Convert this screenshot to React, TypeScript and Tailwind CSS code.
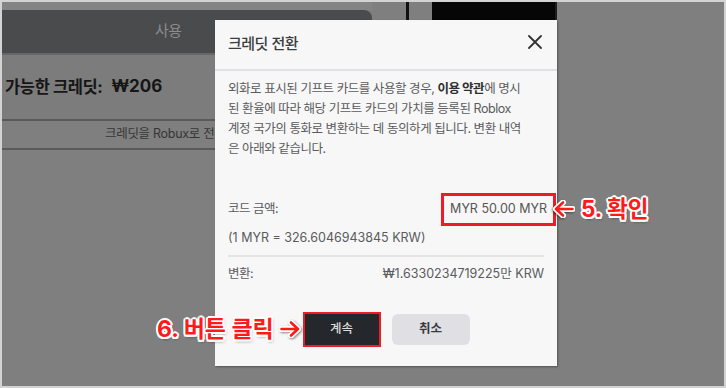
import React from "react";

const outline =
  "[text-shadow:-2px_0_0_#fff,2px_0_0_#fff,0_-2px_0_#fff,0_2px_0_#fff,-1.5px_-1.5px_0_#fff,1.5px_1.5px_0_#fff,-1.5px_1.5px_0_#fff,1.5px_-1.5px_0_#fff,1px_2px_3px_rgba(0,0,0,0.55)]";

function Arrow({ flip }: { flip?: boolean }) {
  return (
    <svg
      width="22"
      height="18"
      viewBox="0 0 22 18"
      className={flip ? "-scale-x-100 drop-shadow-[1px_1px_1px_rgba(0,0,0,0.45)]" : "drop-shadow-[1px_1px_1px_rgba(0,0,0,0.45)]"}
    >
      <path d="M2.5 9 H19 M12 2.5 L19 9 L12 15.5" fill="none" stroke="#fff" strokeWidth="6" strokeLinecap="round" strokeLinejoin="round" />
      <path d="M2.5 9 H19 M12 2.5 L19 9 L12 15.5" fill="none" stroke="#ff1a1a" strokeWidth="2.6" strokeLinecap="round" strokeLinejoin="round" />
    </svg>
  );
}

export default function App() {
  return (
    <div className="relative w-[726px] h-[388px] overflow-hidden bg-[#d3d3d3] p-[2px] font-['Inter','Noto_Sans_CJK_KR',sans-serif]">
      <div className="relative flex w-full h-full bg-[#7f7f7f]">
        {/* left background panel */}
        <div className="flex w-[370px] flex-col overflow-hidden">
          <div className="h-[8px] bg-[#848484]" />
          <div className="flex h-[43px] items-center rounded-tr-[8px] bg-[#4a4b4d] pl-[153px] text-[15px] tracking-[-0.5px] text-[#8b8b8b]">
            사용
          </div>
          <div className="h-[2px] bg-[#676767]" />
          <div className="flex h-[64px] items-center bg-[#7c7c7c]">
            <span className="ml-[-30px] whitespace-nowrap text-[16.5px] font-bold tracking-[-0.4px] text-[#161616]">
              사용 가능한 크레딧:
            </span>
            <span className="ml-[9px] text-[17px] font-bold text-[#161616]">₩206</span>
          </div>
          <div className="h-[2px] bg-[#5a5a5a]" />
          <div className="flex h-[27px] items-center pl-[103px] text-[12.5px] tracking-[-0.3px] text-[#363636] whitespace-nowrap">
            크레딧을 Robux로 전환하기
          </div>
          <div className="h-[2px] bg-[#5a5a5a]" />
        </div>
        <div className="w-[34px]" />
        <div className="h-[18px] w-[3px] bg-[#111]" />
        <div className="w-[23px]" />
        <div className="h-[188px] w-[125px] border-r-2 border-[#1c1c1c]">
          <div className="h-[18px] bg-[#060606]" />
        </div>
      </div>

      {/* modal */}
      <div className="absolute left-[215px] top-[20px] flex h-[346px] w-[342px] flex-col bg-[#f7f7f7] shadow-[1px_1px_2px_rgba(0,0,0,0.35)]">
        <div className="flex h-[49px] items-center justify-between pl-[13px] pr-[15px]">
          <span className="text-[15px] font-medium tracking-[-0.5px] text-[#3a3c3f]">크레딧 전환</span>
          <svg width="14" height="14" viewBox="0 0 14 14" className="mt-[-5px]">
            <path d="M1 1 L13 13 M13 1 L1 13" stroke="#333" strokeWidth="1.8" strokeLinecap="round" />
          </svg>
        </div>
        <div className="h-[2px] bg-[#e0e0e6]" />
        <div className="flex flex-col px-[13px] pt-[8px] text-[12.5px] text-[#5a5b5d]">
          <p className="whitespace-nowrap leading-[20px] tracking-[-0.45px]">
            외화로 표시된 기프트 카드를 사용할 경우, <b className="font-bold text-[#2e2f31]">이용 약관</b>에 명시
            <br />
            된 환율에 따라 해당 기프트 카드의 가치를 등록된 Roblox
            <br />
            계정 국가의 통화로 변환하는 데 동의하게 됩니다. 변환 내역
            <br />
            은 아래와 같습니다.
          </p>
          <div className="mt-[40px] flex h-[20px] items-center justify-between">
            <span className="tracking-[-0.5px]">코드 금액:</span>
            <span className="-mr-[12px] flex h-[33px] items-center border-[3px] border-[#ee1c24] px-[6px] text-[12.5px] text-[#555]">
              MYR 50.00 MYR
            </span>
          </div>
          <div className="mt-[9px] flex h-[20px] items-center">(1 MYR = 326.6046943845 KRW)</div>
          <div className="mt-[7px] h-[2px] bg-[#e4e4e6]" />
          <div className="mt-[7px] flex h-[20px] items-center justify-between">
            <span className="tracking-[-0.5px]">변환:</span>
            <span>₩1.6330234719225만 KRW</span>
          </div>
        </div>
        <div className="mt-[28px] flex items-center justify-center gap-[11px]">
          <div className="border-2 border-[#ee1c24]">
            <div className="flex h-[31px] w-[74px] items-center justify-center bg-[#24272b] text-[12.5px] font-medium text-[#dcdcdc]">
              계속
            </div>
          </div>
          <div className="flex h-[31px] w-[78px] items-center justify-center rounded-[6px] bg-[#dfdfe4] text-[12.5px] font-bold text-[#3a3b3e]">
            취소
          </div>
        </div>
      </div>

      {/* annotations */}
      <div
        className={`absolute left-[553px] top-[195px] flex items-center gap-[6px] whitespace-nowrap text-[22.5px] font-bold leading-[28px] text-[#ff1a1a] ${outline}`}
      >
        <Arrow flip />
        <span>5. 확인</span>
      </div>
      <div
        className={`absolute left-[157px] top-[315px] flex items-center gap-[5px] whitespace-nowrap text-[23px] font-bold leading-[28px] text-[#ff1a1a] ${outline}`}
      >
        <span>6. 버튼 클릭</span>
        <Arrow />
      </div>
    </div>
  );
}
